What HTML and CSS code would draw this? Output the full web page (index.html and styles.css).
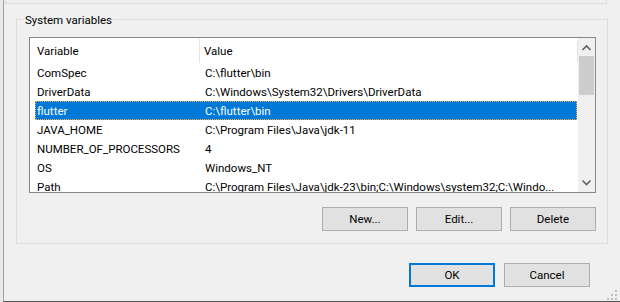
FILE: index.html
```html
<!DOCTYPE html>
<html>
<head>
<meta charset="utf-8">
<link rel="stylesheet" href="styles.css">
</head>
<body>
<div class="screen">
  <div class="behind"></div>
  <div class="window">
    <div class="prev-group"></div>
    <div class="group">
      <div class="group-title">System variables</div>
      <div class="listbox">
        <div class="list-main">
          <div class="list-header">
            <div class="hcell hcell-name">Variable</div>
            <div class="hsep"></div>
            <div class="hcell hcell-value">Value</div>
            <div class="hend"></div>
          </div>
          <div class="row"><span class="c1">ComSpec</span><span class="c2">C:\flutter\bin</span></div>
          <div class="row"><span class="c1">DriverData</span><span class="c2">C:\Windows\System32\Drivers\DriverData</span></div>
          <div class="row selected"><span class="c1">flutter</span><span class="c2">C:\flutter\bin</span></div>
          <div class="row"><span class="c1">JAVA_HOME</span><span class="c2">C:\Program Files\Java\jdk-11</span></div>
          <div class="row"><span class="c1">NUMBER_OF_PROCESSORS</span><span class="c2">4</span></div>
          <div class="row"><span class="c1">OS</span><span class="c2">Windows_NT</span></div>
          <div class="row"><span class="c1">Path</span><span class="c2">C:\Program Files\Java\jdk-23\bin;C:\Windows\system32;C:\Windo...</span></div>
        </div>
        <div class="scrollbar">
          <div class="sb-btn">
            <svg width="17" height="17" viewBox="0 0 17 17"><path d="M4.5 12 L8.5 8 L12.5 12" fill="none" stroke="#606060" stroke-width="1.6"/></svg>
          </div>
          <div class="sb-track"><div class="sb-thumb"></div></div>
          <div class="sb-btn">
            <svg width="17" height="17" viewBox="0 0 17 17"><path d="M4.5 5.5 L8.5 9.5 L12.5 5.5" fill="none" stroke="#606060" stroke-width="1.6"/></svg>
          </div>
        </div>
      </div>
      <div class="group-buttons">
        <button class="btn">New...</button>
        <button class="btn">Edit...</button>
        <button class="btn">Delete</button>
      </div>
    </div>
    <div class="dialog-buttons">
      <button class="btn btn-default">OK</button>
      <button class="btn">Cancel</button>
    </div>
    <svg class="grip" width="14" height="12" viewBox="0 0 14 12">
      <rect x="9" y="1" width="2" height="2" fill="#bdbdbd"/>
      <rect x="5" y="5" width="2" height="2" fill="#bdbdbd"/>
      <rect x="9" y="5" width="2" height="2" fill="#bdbdbd"/>
      <rect x="1" y="9" width="2" height="2" fill="#bdbdbd"/>
      <rect x="5" y="9" width="2" height="2" fill="#bdbdbd"/>
      <rect x="9" y="9" width="2" height="2" fill="#bdbdbd"/>
    </svg>
  </div>
</div>
</body>
</html>
```
FILE: styles.css
```css
body {
  margin: 0;
}

.screen {
  display: flex;
  width: 620px;
  height: 302px;
  overflow: hidden;
  font-family: Roboto, "Liberation Sans", Arial, sans-serif;
  font-size: 11.5px;
  color: #000;
}

.behind {
  flex: none;
  width: 3px;
  background: #e6e9ed;
}

.window {
  position: relative;
  flex: 1;
  display: flex;
  flex-direction: column;
  background: #f0f0f0;
  border-left: 1px solid #a0a0a0;
  border-bottom: 1px solid #555;
}

.prev-group {
  margin-left: 1px;
  width: 600px;
  height: 3px;
  border: 1px solid #dcdcdc;
  border-top: none;
}

.group {
  display: flex;
  flex-direction: column;
  margin: 15px 12px 0 12px;
  padding: 0 11px 12px 12px;
  border: 1px solid #dcdcdc;
}

.group-title {
  align-self: flex-start;
  margin: -7px 0 0 -5px;
  padding: 0 1px;
  line-height: 14px;
  height: 14px;
  background: #f0f0f0;
}

.listbox {
  display: flex;
  margin-top: 10px;
  height: 154px;
  border: 1px solid #828790;
  background: #fff;
}

.list-main {
  flex: 1;
  min-width: 0;
  overflow: hidden;
}

.list-header {
  display: flex;
  height: 25px;
}

.hcell {
  line-height: 26px;
  white-space: nowrap;
}

.hcell-name {
  width: 162px;
  padding-left: 7px;
}

.hsep {
  width: 1px;
  height: 24px;
  margin-top: 1px;
  background: #e5e5e5;
}

.hcell-value {
  flex: 1;
  padding-left: 4px;
}

.hend {
  width: 1px;
  height: 22px;
  margin-top: 2px;
  background: #e5e5e5;
}

.row {
  display: flex;
  height: 19px;
  line-height: 21px;
  margin: 0 1px 0 5px;
  white-space: nowrap;
}

.row.selected {
  background: #0078d7;
  color: #fff;
  outline: 1px dotted #f7b250;
  outline-offset: -1px;
}

.c1 {
  flex: none;
  width: 162px;
  padding-left: 2px;
}

.c2 {
  padding-left: 6px;
}

.scrollbar {
  flex: none;
  width: 17px;
  display: flex;
  flex-direction: column;
  background: #f0f0f0;
}

.sb-btn {
  height: 17px;
}

.sb-btn svg {
  display: block;
}

.sb-track {
  flex: 1;
  padding-top: 1px;
}

.sb-thumb {
  height: 39px;
  margin: 0 1px;
  background: #cdcdcd;
}

.group-buttons {
  display: flex;
  justify-content: flex-end;
  gap: 8px;
  margin-top: 14px;
}

.dialog-buttons {
  display: flex;
  justify-content: flex-end;
  gap: 9px;
  margin: 19px 30px 0 0;
}

.btn {
  box-sizing: border-box;
  width: 86px;
  height: 24px;
  padding: 0;
  border: 1px solid #adadad;
  background: #e1e1e1;
  font: inherit;
  color: #000;
}

.btn-default {
  border: 2px solid #0078d7;
}

.grip {
  position: absolute;
  right: 0;
  bottom: 0;
  display: block;
}
```
